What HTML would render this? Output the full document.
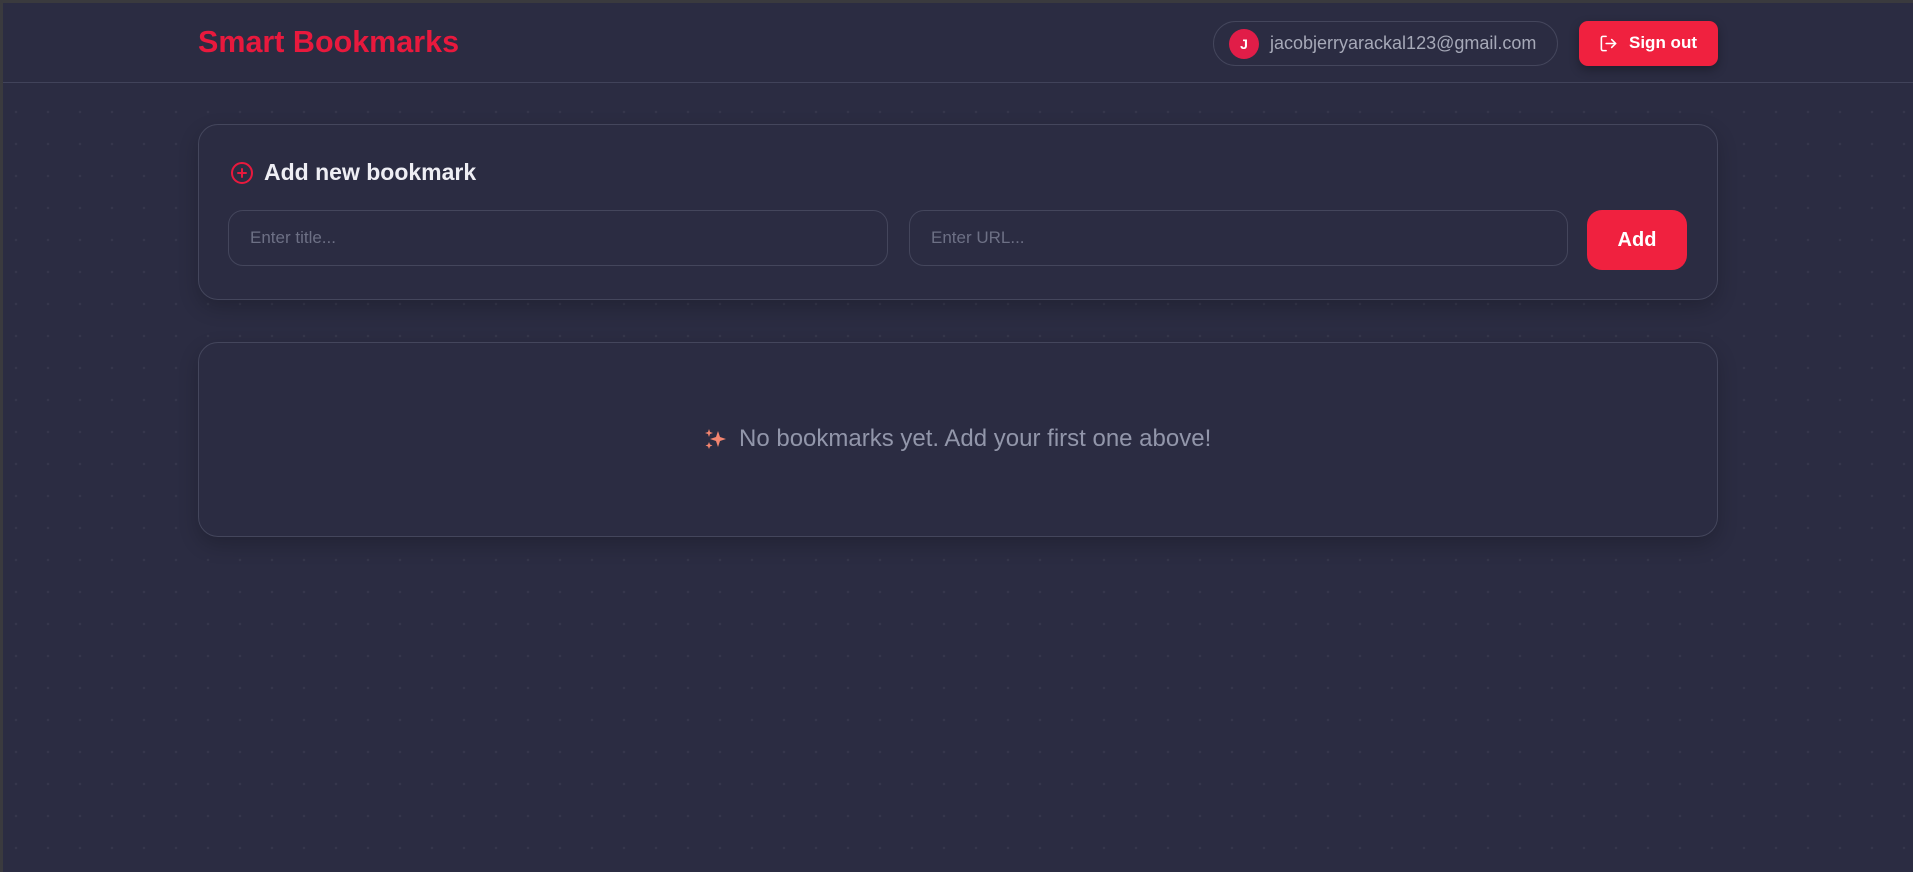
<!DOCTYPE html>
<html><head><meta charset="utf-8"><style>
*{box-sizing:border-box;margin:0;padding:0}
html,body{width:1913px;height:872px;overflow:hidden}
body{background:#2b2c42;font-family:"Liberation Sans",sans-serif;position:relative;
background-image:radial-gradient(circle,rgba(255,255,255,0.05) 1px,transparent 1.5px);background-size:32px 32px}
.abs{position:absolute}
.frame{left:0;top:0;width:1913px;height:872px;border-top:3px solid #3a3a3e;border-left:3px solid #3a3a3e;z-index:5;pointer-events:none}
.hdr{left:0;top:0;width:1913px;height:83px;border-bottom:1px solid #41435a;background:#2b2c42}
.title{left:198px;top:25px;font-size:30.5px;font-weight:bold;color:#e8193d}
.pill{left:1213px;top:21px;width:345px;height:45px;border:1px solid #44465c;border-radius:23px}
.av{left:15px;top:7px;width:30px;height:30px;border-radius:50%;background:#e11d48;color:#fff;font-weight:bold;font-size:14px;text-align:center;line-height:30px}
.em{left:56px;top:11px;font-size:18px;color:#a6a9b8}
.so{left:1579px;top:21px;width:139px;height:45px;background:#f0213f;border-radius:9px;color:#fff;font-weight:bold;font-size:17px;box-shadow:0 4px 10px rgba(0,0,0,.3)}
.card{left:198px;width:1520px;border:1px solid #44465c;border-radius:20px;background:#2b2c42;box-shadow:0 8px 20px rgba(0,0,0,.2)}
.inp{top:210px;height:56px;border:1px solid #44465c;border-radius:15px;color:#6d7085;font-size:17px;padding:17px 0 0 21px}
.add{left:1587px;top:210px;width:100px;height:60px;background:#f0213f;border-radius:15px;color:#fff;font-weight:bold;font-size:20px;text-align:center;line-height:60px}
</style></head><body>
<div class="abs frame"></div>
<div class="abs hdr"></div>
<div class="abs title">Smart Bookmarks</div>
<div class="abs pill"><div class="abs av">J</div><div class="abs em">jacobjerryarackal123@gmail.com</div></div>
<div class="abs so">
<svg class="abs" style="left:20px;top:13px" width="19" height="19" viewBox="0 0 24 24" fill="none" stroke="#fff" stroke-width="2" stroke-linecap="round" stroke-linejoin="round"><path d="M9 21H5a2 2 0 0 1-2-2V5a2 2 0 0 1 2-2h4"/><path d="M16 17l5-5-5-5"/><path d="M21 12H9"/></svg>
<div class="abs" style="left:50px;top:12px">Sign out</div></div>
<div class="abs card" style="top:124px;height:176px"></div>
<svg class="abs" style="left:230px;top:161px" width="24" height="24" viewBox="0 0 24 24" fill="none" stroke="#e8193d" stroke-width="2" stroke-linecap="round"><circle cx="12" cy="12" r="10"/><path d="M12 8v8M8 12h8"/></svg>
<div class="abs" style="left:264px;top:159px;font-size:23px;font-weight:bold;color:#eeeef4">Add new bookmark</div>
<div class="abs inp" style="left:228px;width:660px">Enter title...</div>
<div class="abs inp" style="left:909px;width:659px">Enter URL...</div>
<div class="abs add">Add</div>
<div class="abs card" style="top:342px;height:195px"></div>
<svg class="abs" style="left:704px;top:427px" width="24" height="24" viewBox="0 0 24 24" fill="#f4856f"><path d="M14 4l2 6 6 2-6 2-2 6-2-6-6-2 6-2z"/><path d="M5 2l1 3 3 1-3 1-1 3-1-3-3-1 3-1z"/><path d="M5 15l1 2.5 2.5 1-2.5 1L5 22l-1-2.5-2.5-1 2.5-1z"/></svg>
<div class="abs" style="left:739px;top:425px;font-size:24px;color:#9296aa">No bookmarks yet. Add your first one above!</div>
</body></html>
